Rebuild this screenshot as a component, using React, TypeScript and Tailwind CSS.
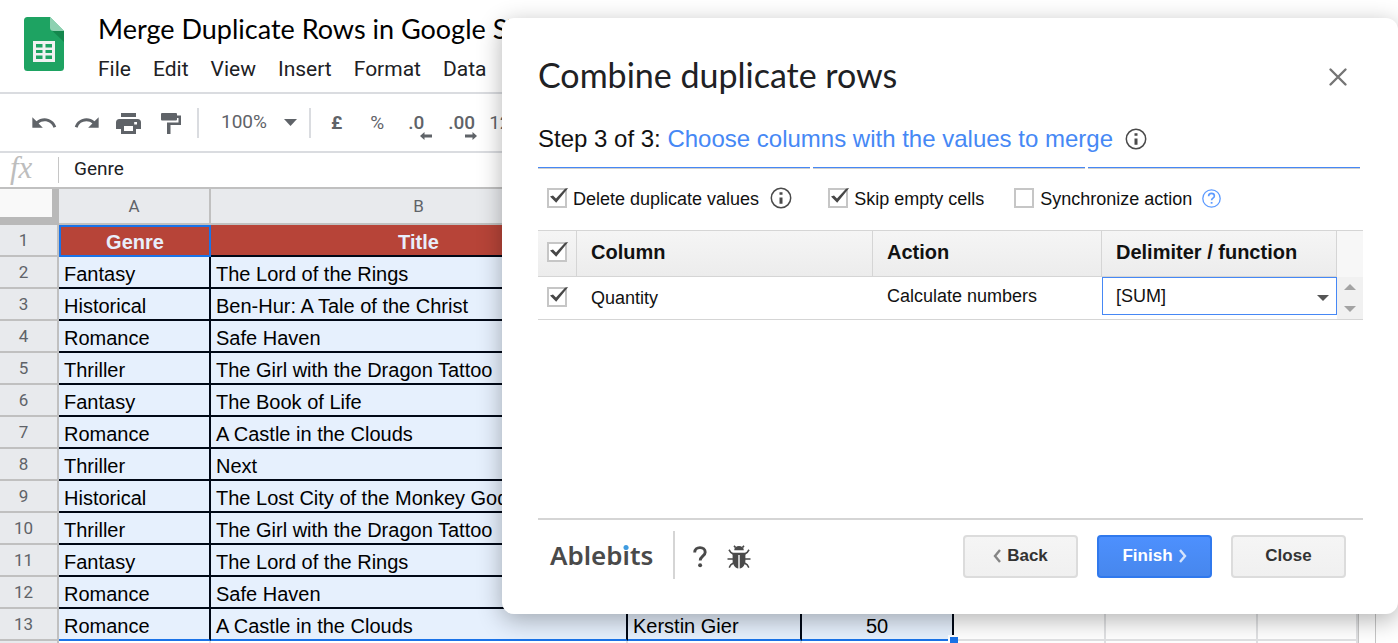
import { useState } from "react";
import type { ReactNode } from "react";
import { MdRedo, MdUndo } from "react-icons/md";

type Row = { genre: string; title: string; author?: string; quantity?: number };

const menus = ["File", "Edit", "View", "Insert", "Format", "Data"];

const rows: Row[] = [
  { genre: "Fantasy", title: "The Lord of the Rings" },
  { genre: "Historical", title: "Ben-Hur: A Tale of the Christ" },
  { genre: "Romance", title: "Safe Haven" },
  { genre: "Thriller", title: "The Girl with the Dragon Tattoo" },
  { genre: "Fantasy", title: "The Book of Life" },
  { genre: "Romance", title: "A Castle in the Clouds" },
  { genre: "Thriller", title: "Next" },
  { genre: "Historical", title: "The Lost City of the Monkey God" },
  { genre: "Thriller", title: "The Girl with the Dragon Tattoo" },
  { genre: "Fantasy", title: "The Lord of the Rings" },
  { genre: "Romance", title: "Safe Haven" },
  { genre: "Romance", title: "A Castle in the Clouds", author: "Kerstin Gier", quantity: 50 }
];

function SheetsLogo() {
  return (
    <svg width="40" height="54" viewBox="0 0 40 54" aria-hidden="true">
      <path d="M3.500 0H26l14 14v36.500a3.500 3.500 0 0 1-3.500 3.500h-33A3.500 3.500 0 0 1 0 50.500v-47A3.500 3.500 0 0 1 3.500 0z" fill="#1ea362" />
      <path d="M27.500 13 40 25V14z" fill="#14874d" />
      <path d="M26 0v10.500a3.500 3.500 0 0 0 3.500 3.500H40z" fill="#8ed1b1" />
      <path d="M9 24h22v21H9z" fill="#f1f1f1" />
      <path d="M12 27h6.500v3.500H12zm9.500 0H28v3.500h-6.500zM12 33h6.500v3H12zm9.500 0H28v3h-6.500zM12 38.500h6.500V42H12zm9.500 0H28V42h-6.500z" fill="#1ea362" />
    </svg>
  );
}

function PrintIcon() {
  return (
    <svg width="25" height="21" viewBox="0 0 25 21" fill="currentColor" aria-hidden="true">
      <path d="M5 0h15v4H5z" />
      <path fillRule="evenodd" d="M3.500 6h18A3.500 3.500 0 0 1 25 9.500V16h-5v5H5v-5H0V9.500A3.500 3.500 0 0 1 3.500 6zM8 13v5h9v-5zm10.200-4v2.600h2.800V9z" />
    </svg>
  );
}

function PaintIcon() {
  return (
    <svg width="20" height="21" viewBox="0 0 20 21" fill="currentColor" aria-hidden="true">
      <path d="M1 0h14a1 1 0 0 1 1 1v1.500h4V12H9.500v9H6V9.500h11.500V5H16v1.500a1 1 0 0 1-1 1H1a1 1 0 0 1-1-1V1a1 1 0 0 1 1-1z" />
    </svg>
  );
}

function DecimalArrow({ right = false }: { right?: boolean }) {
  return (
    <svg width="12" height="8" viewBox="0 0 12 8" fill="currentColor" aria-hidden="true">
      <path d={right ? "M12 4 7.500 0v2.600H0v2.800h7.500V8z" : "M0 4 4.500 0v2.600H12v2.800H4.500V8z"} />
    </svg>
  );
}

function InfoIcon() {
  return (
    <svg width="22" height="22" viewBox="0 0 22 22" aria-hidden="true">
      <circle cx="11" cy="11" r="9.700" fill="none" stroke="#4a4a4a" strokeWidth="1.500" />
      <path d="M9.500 5.200h3v2.600h-3zm0 5.300h3v6.300h-3z" fill="#4a4a4a" />
    </svg>
  );
}

function HelpIcon() {
  return (
    <svg width="19" height="19" viewBox="0 0 19 19" fill="none" stroke="#5c9aff" aria-hidden="true">
      <circle cx="9.500" cy="9.500" r="8.700" strokeWidth="1.300" />
      <path d="M6.600 7.300c0-1.800 1.200-2.900 2.900-2.900s2.900 1 2.900 2.600c0 2.100-2.800 2.300-2.800 4.300" strokeWidth="1.600" />
      <path d="M8.700 13h1.800v1.700H8.700z" fill="#5c9aff" stroke="none" />
    </svg>
  );
}

function BugIcon() {
  return (
    <svg width="24" height="24" viewBox="0 0 24 24" aria-hidden="true">
      <path d="M7.200 5.200A4.800 4.200 0 0 1 16.800 5.200z" fill="#4a4a4a" />
      <path d="M8.600 2.600 7 .8M15.400 2.600 17 .8M7 9.500 3.800 7.500 2 4.800M17 9.500l3.200-2 1.800-2.700M6 14H.5M18 14h5.500M6.500 18l-2.700 1.700-1.600 3M17.500 18l2.700 1.700 1.600 3" fill="none" stroke="#4a4a4a" strokeWidth="1.600" />
      <path d="M5.600 7.700h12.800v7.800c0 4.300-2.600 7.600-5.700 8V10h-1.400v13.500c-3.100-.4-5.700-3.700-5.700-8z" fill="#4a4a4a" />
    </svg>
  );
}

function Checkbox({ id, label, defaultChecked = false }: { id: string; label?: string; defaultChecked?: boolean }) {
  const [checked, setChecked] = useState(defaultChecked);

  return (
    <span className="relative inline-block size-5 shrink-0 align-middle">
      <input
        id={id}
        type="checkbox"
        aria-label={label}
        checked={checked}
        onChange={(e) => setChecked(e.target.checked)}
        className="block size-5 appearance-none border-2 border-[#c6c6c6] bg-white"
      />
      {checked ? (
        <svg className="pointer-events-none absolute top-0 left-0" width="22" height="20" viewBox="0 0 22 20" aria-hidden="true">
          <path d="M3 8.500 6 7.500 9 10.500 18 .8 21.200 0 9.200 14.700z" fill="#474747" />
        </svg>
      ) : null}
    </span>
  );
}

function Option({ id, label, checked, children }: { id: string; label: string; checked?: boolean; children?: ReactNode }) {
  return (
    <div className="flex items-center">
      <Checkbox id={id} defaultChecked={checked} />
      <label htmlFor={id} className="pt-0.5 pl-1.5">
        {label}
      </label>
      {children}
    </div>
  );
}

function Header() {
  return (
    <header className="flex h-[94px] items-start border-b-2 border-[#dadce0] pl-6">
      <a href="#sheets" aria-label="Sheets home" className="pt-[17px]">
        <SheetsLogo />
      </a>
      <div className="pt-3 pl-[34px]">
        <h1 className="font-[Lato,sans-serif] text-[27px] leading-[34px] whitespace-nowrap">
          Merge Duplicate Rows in Google Sheets
        </h1>
        <nav className="mt-2.5 flex gap-[22px] text-[21px] leading-[26px] text-[#202124]">
          {menus.map((menu) => (
            <button key={menu} type="button">
              {menu}
            </button>
          ))}
        </nav>
      </div>
    </header>
  );
}

function Toolbar() {
  return (
    <div className="flex h-[59px] items-center border-b-2 border-[#dadce0] pl-[30px] text-[19px] text-[#5f6368]">
      <button type="button" aria-label="Undo">
        <MdUndo size={28} />
      </button>
      <button type="button" aria-label="Redo" className="ml-[15px]">
        <MdRedo size={28} />
      </button>
      <button type="button" aria-label="Print" className="ml-[15px] pt-0.5">
        <PrintIcon />
      </button>
      <button type="button" aria-label="Paint format" className="ml-5 pt-0.5">
        <PaintIcon />
      </button>
      <div className="ml-4 h-[30px] w-0.5 bg-[#dadce0]" />
      <button type="button" className="ml-[22px] flex items-center gap-[17px]">
        100%
        <svg width="13" height="7" viewBox="0 0 13 7" fill="currentColor" aria-hidden="true">
          <path d="M0 0h13L6.500 7z" />
        </svg>
      </button>
      <div className="ml-3 h-[30px] w-0.5 bg-[#dadce0]" />
      <button type="button" className="ml-5 pt-0.5 font-bold">
        £
      </button>
      <button type="button" className="ml-7 pt-0.5">
        %
      </button>
      <button type="button" className="relative ml-6 pt-0.5 font-medium" aria-label="Decrease decimal places">
        .0
        <span className="absolute -right-2 -bottom-0.5">
          <DecimalArrow />
        </span>
      </button>
      <button type="button" className="relative ml-6 pt-0.5 font-medium" aria-label="Increase decimal places">
        .00
        <span className="absolute -right-0.5 -bottom-0.5">
          <DecimalArrow right />
        </span>
      </button>
      <button type="button" className="ml-[14px] pt-0.5">
        123
      </button>
    </div>
  );
}

function FormulaBar() {
  return (
    <div className="flex h-9 items-center border-b-2 border-[#c0c0c0]">
      <span className="w-[58px] pb-1 pl-2.5 font-['Liberation_Serif',serif] text-[31px] leading-[30px] text-[#bdbdbd] italic">fx</span>
      <input
        aria-label="Formula"
        defaultValue="Genre"
        className="h-[26px] min-w-0 flex-1 border-l border-[#c6c6c6] pb-0.5 pl-[15px] text-[19px] text-[#202124]"
      />
    </div>
  );
}

const headCell = "border-r-2 border-b-2 border-[#c0c0c0] bg-[#e8eaed] font-normal text-[#5f6368]";
const bookCell = "border-r-2 border-b-2 border-[#000816] bg-[#e6f0fd] px-[5px] pt-1 pb-0 whitespace-nowrap";
const titleCell = "border-r-2 border-b-2 border-[#000816] bg-[#b74438] pt-1 pb-0 text-[#e8eefb]";
const emptyCell = "border-r-2 border-b-2 border-[#e0e1e3]";

function Sheet() {
  return (
    <div className="relative w-[1376px] border-r border-[#c6c6c6]">
      <table className="w-[1359px] table-fixed border-separate border-spacing-0 border-r border-[#c6c6c6] font-['Liberation_Sans',sans-serif] text-[20px] leading-[26px]">
        <colgroup>
          <col className="w-[59px]" />
          <col className="w-[152px]" />
          <col className="w-[417px]" />
          <col className="w-[174px]" />
          <col className="w-[152px]" />
          <col className="w-[152px]" />
          <col className="w-[152px]" />
          <col className="w-[100px]" />
        </colgroup>
        <thead className="font-[Roboto,sans-serif] text-[17px]">
          <tr className="h-9">
            <td className="border-r-[7px] border-b-8 border-[#b9b9b9] bg-[#f9f9f9]" />
            <th scope="col" className={headCell}>
              A
            </th>
            <th scope="col" className={headCell}>
              B
            </th>
            <td colSpan={5} className={headCell} />
          </tr>
        </thead>
        <tbody>
          <tr className="h-8">
            <th scope="row" className={`${headCell} pr-2.5 font-[Roboto,sans-serif] text-[17px]`}>
              1
            </th>
            <th className="border-2 border-[#1a73e8] bg-[#b74438] pt-0.5 pb-0 text-[#e8eefb]">Genre</th>
            <th className={titleCell}>Title</th>
            <td className={titleCell} />
            <td className={titleCell} />
            <td className={emptyCell} />
            <td className={emptyCell} />
            <td className={emptyCell} />
          </tr>
          {rows.map((row, i) => {
            const edge = i === rows.length - 1 ? "border-b-[#1a73e8]" : "";
            return (
              <tr key={i} className="h-8">
                <th scope="row" className={`${headCell} pr-2.5 font-[Roboto,sans-serif] text-[17px]`}>
                  {i + 2}
                </th>
                <td className={`${bookCell} ${edge}`}>{row.genre}</td>
                <td className={`${bookCell} ${edge}`}>{row.title}</td>
                <td className={`${bookCell} ${edge}`}>{row.author}</td>
                <td className={`${bookCell} ${edge} relative text-center`}>
                  {row.quantity}
                  {edge ? (
                    <span className="absolute -right-1.5 -bottom-1.5 size-2.5 border-t-2 border-l-2 border-white bg-[#1a73e8]" />
                  ) : null}
                </td>
                <td className={emptyCell} />
                <td className={emptyCell} />
                <td className={emptyCell} />
              </tr>
            );
          })}
          <tr className="h-8">
            <td className={headCell} />
            {[1, 2, 3, 4, 5, 6, 7].map((n) => (
              <td key={n} className={emptyCell} />
            ))}
          </tr>
        </tbody>
      </table>
    </div>
  );
}

const columnHead = "border-r border-b border-[#d5d5d5] pb-1 pl-[14px] text-left text-[20px] font-bold";
const plainButton =
  "flex h-[43px] w-[115px] items-center justify-center gap-1.5 rounded-sm border-2 border-[#dcdcdc] bg-linear-to-b from-[#f5f5f5] to-[#f0f0f0] pb-0.5 text-[17px] font-bold text-[#333333]";

function Dialog() {
  return (
    <section
      role="dialog"
      aria-labelledby="dialog-title"
      className="absolute top-[18px] right-0 flex h-[596px] w-[896px] max-w-full flex-col rounded-xl bg-white pr-[35px] pl-9 font-['Liberation_Sans',sans-serif] text-[18px] text-[#111111] shadow-[0_6px_24px_rgba(0,0,0,0.3)]"
    >
      <div className="flex items-center justify-between pt-9 pr-[15px]">
        <h2 id="dialog-title" className="pb-0.5 font-[Lato,sans-serif] text-[34px] leading-[42px] text-[#202124]">
          Combine duplicate rows
        </h2>
        <button type="button" aria-label="Close dialog" className="pt-0.5">
          <svg width="20" height="20" viewBox="0 0 20 20" stroke="#757575" strokeWidth="2.400" strokeLinecap="round" aria-hidden="true">
            <path d="M2.500 2.500l15 15M17.500 2.500l-15 15" />
          </svg>
        </button>
      </div>
      <div className="mt-[26px] flex items-center gap-3 text-[24px] leading-[30px]">
        <p>
          Step 3 of 3: <span className="text-[#4688f5]">Choose columns with the values to merge</span>
        </p>
        <InfoIcon />
      </div>
      <div className="mt-[13px] flex gap-[3px] pr-[3px]">
        <div className="h-0.5 flex-1 border-b border-[#cfcfcf] bg-[#4688f5]" />
        <div className="h-0.5 flex-1 border-b border-[#cfcfcf] bg-[#4688f5]" />
        <div className="h-0.5 flex-1 border-b border-[#cfcfcf] bg-[#4688f5]" />
      </div>
      <div className="flex items-center pt-[17px] pl-[9px] leading-[22px]">
        <Option id="delete-duplicates" label="Delete duplicate values" checked>
          <span className="pl-[11px]">
            <InfoIcon />
          </span>
        </Option>
        <div className="w-9" />
        <Option id="skip-empty" label="Skip empty cells" checked />
        <div className="w-[30px]" />
        <Option id="synchronize" label="Synchronize action">
          <a href="#help" aria-label="Help" className="pl-2.5">
            <HelpIcon />
          </a>
        </Option>
      </div>
      <div className="mt-5 flex border-y border-[#d5d5d5]">
        <table className="min-w-0 flex-1 table-fixed border-separate border-spacing-0">
          <colgroup>
            <col className="w-[39px]" />
            <col className="w-[296px]" />
            <col className="w-[229px]" />
            <col />
          </colgroup>
          <thead className="bg-linear-to-b from-[#f5f5f5] to-[#ececec]">
            <tr className="h-[46px]">
              <th className="border-r border-b border-[#d5d5d5] pb-1 text-center">
                <Checkbox id="all-columns" label="Select all columns" defaultChecked />
              </th>
              <th className={columnHead}>Column</th>
              <th className={columnHead}>Action</th>
              <th className={columnHead}>Delimiter / function</th>
            </tr>
          </thead>
          <tbody>
            <tr className="h-[42px]">
              <td className="border-r border-transparent pb-1 text-center">
                <Checkbox id="quantity" defaultChecked />
              </td>
              <td className="pl-[14px]">
                <label htmlFor="quantity">Quantity</label>
              </td>
              <td className="pb-1 pl-[14px]">Calculate numbers</td>
              <td className="p-0 align-top">
                <div className="relative">
                  <select
                    aria-label="Delimiter or function"
                    className="h-[38px] w-full appearance-none border border-[#4688f5] bg-white pl-[13px] outline-0"
                  >
                    <option>[SUM]</option>
                  </select>
                  <svg className="pointer-events-none absolute top-[18px] right-2" width="12" height="6" viewBox="0 0 12 6" aria-hidden="true">
                    <path d="M0 0h12L6 6z" fill="#555555" />
                  </svg>
                </div>
              </td>
            </tr>
          </tbody>
        </table>
        <div className="flex w-[26px] flex-col">
          <div className="h-[46px] bg-[#f7f7f7]" />
          <div className="flex flex-1 flex-col items-center justify-between bg-[#f1f1f1] py-[7px]">
            <svg width="12" height="6" viewBox="0 0 12 6" aria-hidden="true">
              <path d="M0 6h12L6 0z" fill="#a3a3a3" />
            </svg>
            <svg width="12" height="6" viewBox="0 0 12 6" aria-hidden="true">
              <path d="M0 0h12L6 6z" fill="#a3a3a3" />
            </svg>
          </div>
        </div>
      </div>
      <footer className="mt-auto mb-[35px] flex items-start border-t-2 border-[#d5d5d5]">
        <div className="mt-[11px] flex h-12 items-center border-r-2 border-[#d5d5d5] pr-5 pl-3 font-['Noto_Sans',sans-serif] text-[26px] font-semibold text-[#4a4a4a]">
          Ableb
          <span className="relative">
            i
            <span className="absolute top-[9px] left-1/2 size-[5px] -translate-x-1/2 rounded-full bg-[#3f9be0]" />
          </span>
          ts
        </div>
        <button type="button" aria-label="Help" className="mt-[26px] ml-[18px]">
          <svg width="14" height="22" viewBox="0 0 14 22" aria-hidden="true">
            <path d="M1.700 6.400C1.700 3.400 4 1.600 7 1.600s5.200 1.700 5.200 4.600c0 4-5 4-5 8.300" fill="none" stroke="#4a4a4a" strokeWidth="2.900" />
            <circle cx="7.100" cy="19.200" r="2" fill="#4a4a4a" />
          </svg>
        </button>
        <button type="button" aria-label="Report a bug" className="mt-[25px] ml-5">
          <BugIcon />
        </button>
        <div className="ml-auto flex gap-[19px] pt-[15px] pr-[17px]">
          <button type="button" className={plainButton}>
            <svg width="8" height="14" viewBox="0 0 8 14" fill="none" stroke="#858585" strokeWidth="2.400" aria-hidden="true">
              <path d="M7 1 2 7l5 6" />
            </svg>
            Back
          </button>
          <button
            type="button"
            className="flex h-[43px] w-[115px] items-center justify-center gap-1.5 rounded-sm border-2 border-[#3079ed] bg-linear-to-b from-[#4d90fe] to-[#4787ed] pb-0.5 text-[17px] font-bold text-white"
          >
            Finish
            <svg width="8" height="14" viewBox="0 0 8 14" fill="none" stroke="#d5e4fc" strokeWidth="2.400" aria-hidden="true">
              <path d="M1 1l5 6-5 6" />
            </svg>
          </button>
          <button type="button" className={plainButton}>
            Close
          </button>
        </div>
      </footer>
    </section>
  );
}

export default function App() {
  return (
    <main className="relative h-screen overflow-hidden bg-white font-[Roboto,sans-serif] text-black">
      <Header />
      <Toolbar />
      <FormulaBar />
      <Sheet />
      <Dialog />
    </main>
  );
}
